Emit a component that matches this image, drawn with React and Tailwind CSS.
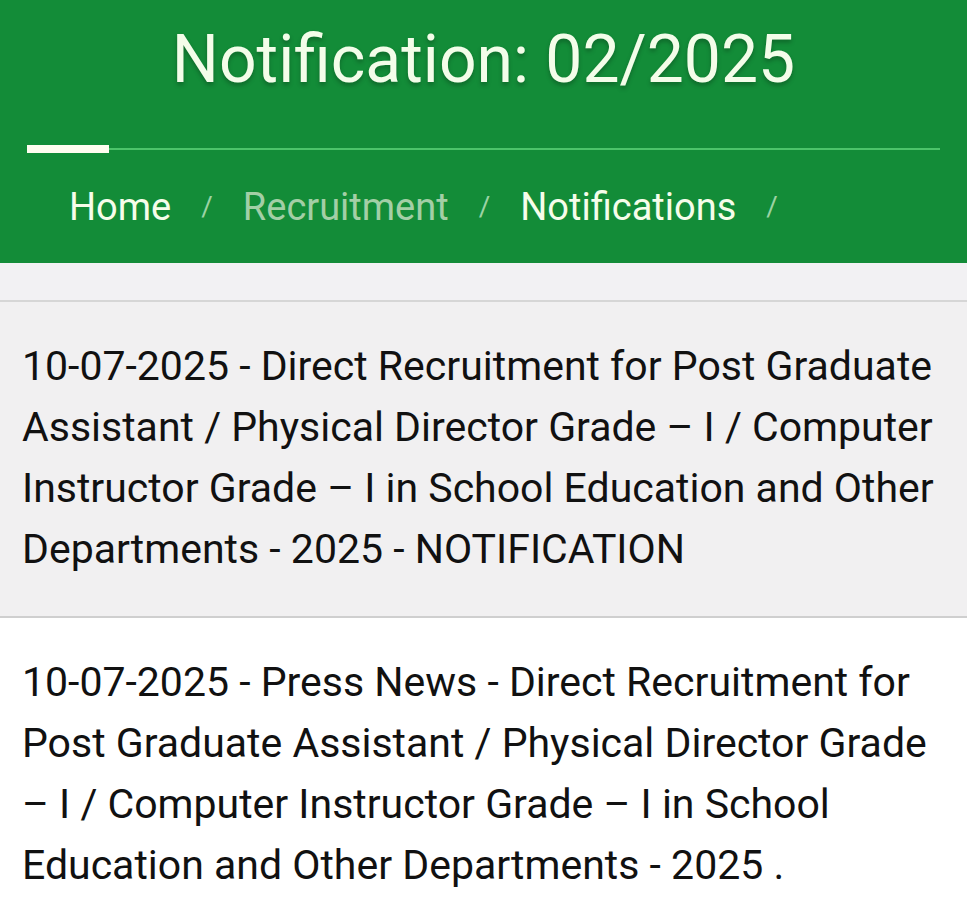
export default function App() {
  const items = [
    {
      text: "10-07-2025 - Direct Recruitment for Post Graduate Assistant / Physical Director Grade – I / Computer Instructor Grade – I in School Education and Other Departments - 2025 - NOTIFICATION",
      bg: "bg-[#f1f0f1]",
    },
    {
      text: "10-07-2025 - Press News - Direct Recruitment for Post Graduate Assistant / Physical Director Grade – I / Computer Instructor Grade – I in School Education and Other Departments - 2025 .",
      bg: "bg-white",
    },
  ];

  return (
    <div className="min-h-screen bg-white" style={{ fontFamily: "Roboto, 'Liberation Sans', sans-serif" }}>
      <div className="bg-[#138c38] h-[263px] px-[27px] pt-[22px]">
        <h1 className="text-center text-[#f3fde9] text-[66px] leading-[76px] [text-shadow:0_3px_4px_rgba(0,0,0,0.25)]">
          Notification: 02/2025
        </h1>
        <div className="relative mt-[50px] h-[2px] bg-[#4cc46a]">
          <div className="absolute left-0 -top-[3px] h-[8px] w-[82px] bg-[#fffdf0]" />
        </div>
        <nav className="flex items-center pl-[42px] mt-[28px] text-[38px] leading-[58px]">
          <span className="text-[#f6fdea]">Home</span>
          <span className="text-[#9bd3a4] text-[28px] px-[30px]">/</span>
          <span className="text-[#a3cfa6]">Recruitment</span>
          <span className="text-[#9bd3a4] text-[28px] px-[30px]">/</span>
          <span className="text-[#f6fdea]">Notifications</span>
          <span className="text-[#9bd3a4] text-[28px] px-[30px]">/</span>
        </nav>
      </div>
      <div className="h-[39px] bg-[#f2f1f3] border-b-2 border-[#d6d6d6]" />
      {items.map((it, i) => (
        <div key={i} className={`${it.bg} border-b-2 border-[#cfcfcf] px-[22px] pt-[34px] pb-[36px]`}>
          <p className="text-[#111] text-[41px] leading-[61px]">{it.text}</p>
        </div>
      ))}
    </div>
  );
}
